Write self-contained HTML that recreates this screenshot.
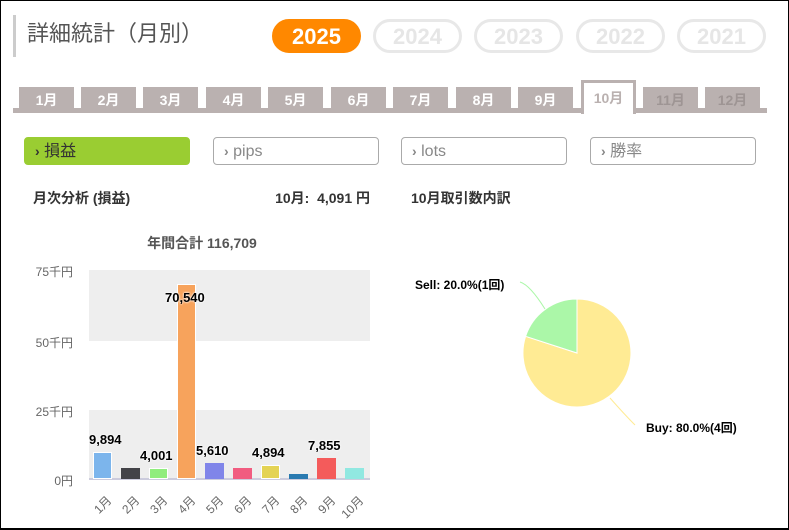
<!DOCTYPE html>
<html><head><meta charset="utf-8"><style>
*{margin:0;padding:0;box-sizing:border-box}
body{width:789px;height:530px;overflow:hidden;background:#fff;font-family:"Liberation Sans","Noto Sans CJK JP",sans-serif;position:relative}
.frame{position:absolute;left:0;top:0;width:789px;height:530px;border:1px solid #000;border-bottom-width:2px}
.abs{position:absolute}
.title{left:13px;top:15px;height:42px;border-left:3px solid #ccc;padding-left:11px;font-size:22px;color:#555;line-height:38px}
.yr{position:absolute;top:19px;height:34px;width:89px;border-radius:17px;font-size:22px;font-weight:bold;text-align:center;line-height:29px;border:3px solid #e8e8e8;color:#e6e6e6}
.tab{position:absolute;top:87px;height:22px;width:55px;background:#bab1b0;color:#fff;font-weight:bold;font-size:14px;text-align:center;line-height:26px}
.btn{position:absolute;top:137px;height:28px;width:166px;border:1px solid #aaa;border-radius:4px;font-size:16px;color:#888;line-height:26px;padding-left:10px}
.h{font-size:14px;font-weight:bold;color:#333}
.yl{position:absolute;right:716px;font-size:12px;color:#666}
.bar{position:absolute;width:19px;bottom:51px}
.vl{position:absolute;font-size:13px;font-weight:bold;color:#000;text-shadow:0 0 2px #fff,0 0 2px #fff}
.xl{position:absolute;top:492px;font-size:12px;color:#666;transform:rotate(-45deg);transform-origin:right top;text-align:right;width:30px}
</style></head><body>
<div class="abs title">詳細統計（月別）</div>
<div class="yr" style="left:272px;background:#ff8800;border-color:#ff8800;color:#fff">2025</div>
<div class="yr" style="left:373px">2024</div>
<div class="yr" style="left:474px">2023</div>
<div class="yr" style="left:576px">2022</div>
<div class="yr" style="left:677px">2021</div>
<div class="abs" style="left:13px;top:108px;width:754px;height:5px;background:#bab1b0"></div>
<div class="tab" style="left:19px">1月</div>
<div class="tab" style="left:81px">2月</div>
<div class="tab" style="left:143px">3月</div>
<div class="tab" style="left:206px">4月</div>
<div class="tab" style="left:268px">5月</div>
<div class="tab" style="left:331px">6月</div>
<div class="tab" style="left:393px">7月</div>
<div class="tab" style="left:456px">8月</div>
<div class="tab" style="left:518px">9月</div>
<div class="tab" style="left:581px;top:80px;height:34px;background:#fff;border:3px solid #bab1b0;border-bottom:none;color:#bab1b0;line-height:30px">10月</div>
<div class="tab" style="left:643px;color:#9e9594">11月</div>
<div class="tab" style="left:705px;color:#9e9594">12月</div>
<div class="btn" style="left:24px;background:#9acd32;border-color:#9acd32;color:#333"><b style="font-size:14px">›</b> 損益</div>
<div class="btn" style="left:213px"><b style="font-size:14px">›</b> pips</div>
<div class="btn" style="left:401px"><b style="font-size:14px">›</b> lots</div>
<div class="btn" style="left:590px"><b style="font-size:14px">›</b> 勝率</div>
<div class="abs h" style="left:33px;top:188px">月次分析 (損益)</div>
<div class="abs h" style="left:258px;top:188px;width:112px;text-align:right">10月:&nbsp; 4,091 円</div>
<div class="abs h" style="left:411px;top:188px">10月取引数内訳</div>
<div class="abs" style="left:140px;top:233px;font-size:14px;font-weight:bold;color:#555;width:124px;text-align:center">年間合計 116,709</div>
<div class="abs" style="left:89px;top:270px;width:281px;height:71px;background:#eee"></div>
<div class="abs" style="left:89px;top:410px;width:281px;height:69px;background:#eee"></div>
<div class="abs" style="left:89px;top:478px;width:281px;height:2px;background:#ccd"></div>
<div class="yl" style="top:263px">75千円</div>
<div class="yl" style="top:334px">50千円</div>
<div class="yl" style="top:403px">25千円</div>
<div class="yl" style="top:472px">0円</div>
<div class="bar" style="left:93px;height:27px;background:#7cb5ec;border:1px solid #fff"></div>
<div class="bar" style="left:121px;height:11px;background:#434348"></div>
<div class="bar" style="left:149px;height:11px;background:#90ed7d;border:1px solid #fff"></div>
<div class="bar" style="left:177px;height:195px;background:#f7a35c;border:1px solid #fff"></div>
<div class="bar" style="left:205px;height:16px;background:#8085e9"></div>
<div class="bar" style="left:233px;height:11px;background:#f15c80"></div>
<div class="bar" style="left:261px;height:14px;background:#e4d354;border:1px solid #fff"></div>
<div class="bar" style="left:289px;height:5px;background:#2a7ab0"></div>
<div class="bar" style="left:317px;height:21px;background:#f45b5b"></div>
<div class="bar" style="left:345px;height:11px;background:#91e8e1"></div>
<div class="vl" style="left:89px;top:432px">9,894</div>
<div class="vl" style="left:140px;top:448px">4,001</div>
<div class="vl" style="left:165px;top:290px">70,540</div>
<div class="vl" style="left:196px;top:443px">5,610</div>
<div class="vl" style="left:252px;top:445px">4,894</div>
<div class="vl" style="left:308px;top:438px">7,855</div>
<div class="xl" style="left:73px">1月</div>
<div class="xl" style="left:101px">2月</div>
<div class="xl" style="left:129px">3月</div>
<div class="xl" style="left:157px">4月</div>
<div class="xl" style="left:185px">5月</div>
<div class="xl" style="left:213px">6月</div>
<div class="xl" style="left:241px">7月</div>
<div class="xl" style="left:269px">8月</div>
<div class="xl" style="left:297px">9月</div>
<div class="xl" style="left:325px">10月</div>
<svg class="abs" style="left:0;top:0" width="789" height="530">
<path d="M577 353 L577 299 A54 54 0 1 1 525.6 336.3 Z" fill="#ffeb94" stroke="#fff" stroke-width="1"/>
<path d="M577 353 L525.6 336.3 A54 54 0 0 1 577 299 Z" fill="#abf7a8" stroke="#fff" stroke-width="1"/>
<path d="M520 282 Q530 285 545 309" fill="none" stroke="#abf7a8"/>
<path d="M610 398 Q625 415 635 425" fill="none" stroke="#ffeb94"/>
<text x="415" y="289" font-size="12" font-weight="bold" font-family="Liberation Sans,Noto Sans CJK JP,sans-serif">Sell: 20.0%(1回)</text>
<text x="646" y="432" font-size="12" font-weight="bold" font-family="Liberation Sans,Noto Sans CJK JP,sans-serif">Buy: 80.0%(4回)</text>
</svg>
<div class="frame"></div>
</body></html>
